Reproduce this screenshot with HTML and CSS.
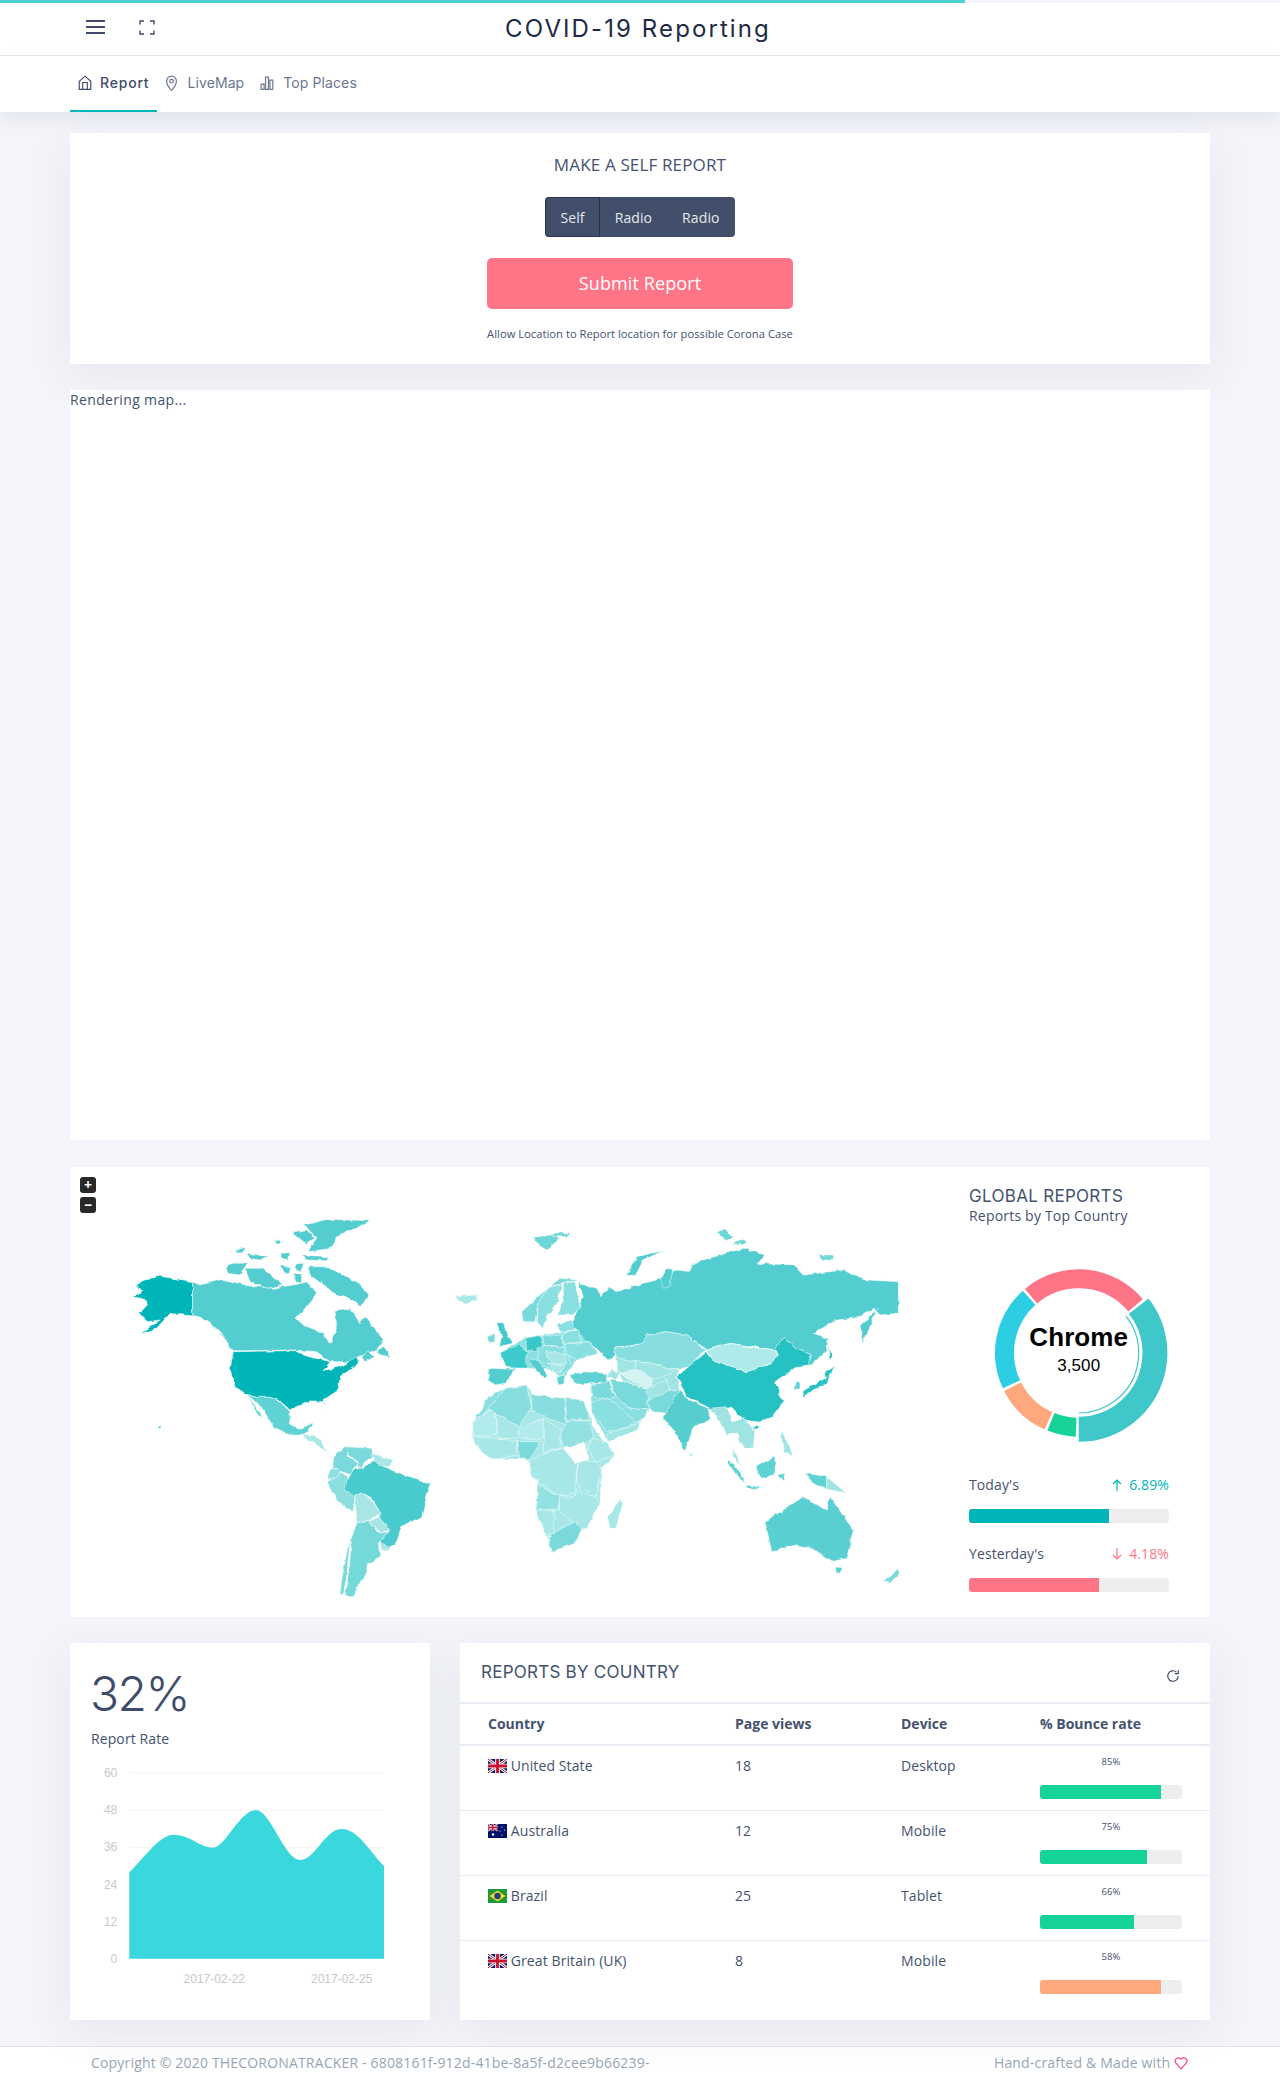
FILE: index.html
```html
<!DOCTYPE html>
<html lang="en">
<head>
    <meta charset="UTF-8">
    <meta name="viewport" content="width=device-width, initial-scale=1.0">
    <title>COVID-19 Reporting</title>
    <link rel="stylesheet" href="styles.css">
</head>
<body>
    <div class="load-bar"></div>
    <header class="topbar">
        <div class="topbar-icons">
            <svg class="icon-menu" width="19" height="14" viewBox="0 0 19 14"><path d="M0 1h19M0 7h19M0 13h19" stroke="#3e4b6b" stroke-width="2"/></svg>
            <svg class="icon-expand" width="16" height="15" viewBox="0 0 16 15"><path d="M1 4.500V1h4M11 1h4v3.500M15 10.500V14h-4M5 14H1v-3.500" fill="none" stroke="#3e4b6b" stroke-width="1.400"/></svg>
        </div>
        <div class="brand">COVID-19 Reporting</div>
    </header>
    <nav class="tabs">
        <a class="tab active">
            <svg width="14" height="15" viewBox="0 0 24 26" fill="none" stroke="currentColor" stroke-width="2"><path d="M2 11l10-9 10 9v14H2z"/><path d="M8 25V13h8v12"/></svg>
            Report
        </a>
        <a class="tab">
            <svg width="13" height="16" viewBox="0 0 20 26" fill="none" stroke="currentColor" stroke-width="2"><path d="M10 25S2 16 2 10a8 8 0 0 1 16 0c0 6-8 15-8 15z"/><circle cx="10" cy="10" r="3"/></svg>
            LiveMap
        </a>
        <a class="tab">
            <svg width="14" height="14" viewBox="0 0 24 24" fill="none" stroke="currentColor" stroke-width="2"><path d="M2 14h5v9H2zM9.500 2h5v21h-5zM17 7h5v16h-5z"/></svg>
            Top Places
        </a>
    </nav>

    <main class="content">
        <section class="card shadow report-card">
            <h4 class="report-title">MAKE A SELF REPORT</h4>
            <div class="btn-group">
                <button class="selected">Self</button>
                <button>Radio</button>
                <button>Radio</button>
            </div>
            <button class="btn-submit">Submit Report</button>
            <p class="report-note">Allow Location to Report location for possible Corona Case</p>
        </section>

        <section class="card live-map">Rendering map...</section>

        <section class="card global-card">
            <div class="zoom-controls">
                <span>+</span>
                <span>−</span>
            </div>
            <svg class="world" width="875" height="450" viewBox="70 1167 875 450">
                <defs>
                    <filter id="rough" x="-2%" y="-2%" width="104%" height="104%">
                        <feTurbulence type="fractalNoise" baseFrequency=".14" numOctaves="2" seed="4"/>
                        <feDisplacementMap in="SourceGraphic" scale="4" xChannelSelector="R" yChannelSelector="G"/>
                    </filter>
                </defs>
                <g filter="url(#rough)">
                <!-- Americas, coordinates are 3x from 60,1160 -->
                <g transform="translate(60 1160) scale(.33333)" stroke="#fff" stroke-width="1.500">
                    <path fill="#00b5b8" d="M398 365L290 347 228 375 245 395 218 410 258 418 262 435 238 460 262 485 300 480 240 522 290 505 330 460 345 462 398 468Z"/>
                    <path fill="#52cdd0" d="M398 365L420 375 490 358 570 378 640 385 700 375 745 365 770 400 735 445 708 475 730 495 790 520 810 553 830 500 825 450 870 445 900 488 915 470 970 540 950 570 895 590 870 605 810 605 770 575 710 570 520 572 490 530 465 505 440 480 398 465Z"/>
                    <path fill="#52cdd0" d="M735 195L800 178 930 182 890 205 835 225 815 265 745 275 768 235ZM700 215L740 210 765 235 740 250 710 235ZM745 320L800 320 890 365 928 405 905 440 860 410 820 400 790 370 745 345ZM555 325L610 325 670 375 620 385 570 365ZM505 310L560 310 540 345 500 340ZM560 280L630 290 600 300 570 295ZM660 280L690 278 685 298 660 295ZM725 285L805 290 800 302 740 300ZM525 270L560 262 545 280ZM640 238L675 250 650 252ZM660 318L695 320 690 340 670 342ZM705 312L735 310 725 335 705 330ZM700 340L725 345 725 370 705 365ZM905 590L925 575 945 590 915 605ZM950 575L970 555 990 590 960 585Z"/>
                    <path fill="#00b5b8" d="M520 575L708 572 745 590 790 600 810 605 790 632 840 620 890 590 895 610 840 650 835 690 790 720 805 755 790 725 750 722 690 750 660 722 625 712 585 712 560 703 525 680 510 630Z"/>
                    <path fill="#5fd2d3" d="M560 705L585 712 630 712 660 725 690 755 690 790 715 808 760 788 745 815 720 825 690 825 640 800 610 750 580 720ZM565 708L610 775 590 760Z"/>
                    <path fill="#aae8e8" d="M730 825L760 825 785 840 790 865 815 880 790 870 760 845 730 835Z"/>
                    <path fill="#7ad9da" d="M825 880L860 860 865 890 895 910 880 930 875 945 845 935 815 925ZM860 860L935 865 940 890 915 905 900 925 890 905 865 885Z"/>
                    <path fill="#a8e7e7" d="M935 880L1000 900 985 920 945 920Z"/>
                    <path fill="#8ddfdf" d="M815 925L845 935 815 965 802 955ZM802 965L845 938 880 960 855 985 885 1010 880 1055 845 1035 815 995Z"/>
                    <path fill="#49cbcd" d="M880 930L915 920 940 905 1005 935 1110 970 1085 1070 1025 1100 1010 1145 985 1165 960 1145 985 1110 960 1085 955 1050 940 1020 905 1000 880 1010 855 985 860 965Z"/>
                    <path fill="#a8e6e6" d="M885 1005L905 1000 940 1025 960 1060 925 1085 890 1088ZM925 1085L960 1070 985 1110 965 1120ZM960 1145L990 1165 965 1175Z"/>
                    <path fill="#74d8d9" d="M890 1088L925 1085 960 1120 985 1115 955 1150 960 1190 925 1215 920 1245 895 1275 880 1310 855 1310 870 1200 875 1130ZM880 1100L870 1150 860 1240 850 1305 840 1305 845 1260 860 1180Z"/>
                    <path fill="#a8e7e7" d="M1188 405L1250 403 1250 420 1215 432Z"/>
                    <path fill="#00b5b8" d="M296 796h6v6h-6z"/>
                </g>
                <!-- Eurasia, Africa and Oceania, 3x from 450,1200 -->
                <g transform="translate(450 1200) scale(.33333)" stroke="#fff" stroke-width="1.500">
                    <path fill="#a8e7e7" d="M18 288L75 282 82 298 50 312 28 305Z"/>
                    <path fill="#6dd6d7" d="M250 112L300 105 330 115 290 150 265 135ZM300 100L358 98 350 110 310 110ZM800 95L825 88 850 110 825 122ZM855 125L880 118 888 130 850 132ZM1105 165L1150 165 1150 178 1115 180Z"/>
                    <path fill="#8ae0e0" d="M150 458L225 415 335 395 385 390 420 425 445 460 380 480 365 500 340 540 300 510 235 505Z"/>
                    <path fill="#a0e4e4" d="M495 470L690 505 680 530 690 570 660 570 590 565 520 545 505 520Z"/>
                    <path fill="#8ae0e0" d="M420 550L470 550 495 590 540 625 600 630 578 655 545 680 475 725 425 635Z"/>
                    <path fill="#a8e7e7" d="M115 590L165 565 230 555 250 585 345 595 400 600 425 660 440 700 470 725 495 765 455 810 450 910 410 985 395 990 375 1030 305 1055 290 1010 258 930 265 850 240 820 240 785 210 775 130 780 90 750 65 710 70 665Z"/>
                    <path fill="#52cdd0" d="M385 250L440 265 455 290 480 262 500 275 560 255 640 235 680 210 720 215 725 195 760 180 880 145 945 165 920 190 1030 195 1060 225 1180 210 1250 240 1345 245 1345 340 1290 345 1270 325 1215 355 1160 360 1090 400 1135 415 1130 450 1085 495 1075 495 1085 460 1040 445 1000 412 975 450 920 440 840 430 770 450 710 405 650 395 590 405 580 435 500 440 492 470 470 480 440 445 385 400 365 370 385 320 400 290Z"/>
                    <path fill="#52cdd0" d="M530 225L560 170 640 152 580 180 555 230ZM632 240L650 205 668 208 660 260 640 265ZM1230 380L1285 325 1255 385 1238 430Z"/>
                    <path fill="#7ad9da" d="M215 335L270 285 330 235 385 240 340 250 300 260 265 310 255 365 220 365Z"/>
                    <path fill="#8ae0e0" d="M300 262L335 252 325 300 295 345 280 385 258 370 262 310ZM340 250L375 245 390 320 365 345 325 345 340 290Z"/>
                    <path fill="#43c9cb" d="M140 368L160 368 170 400 188 430 148 440 155 410Z"/>
                    <path fill="#7ad9da" d="M115 410L135 400 135 425 118 428Z"/>
                    <path fill="#3ccacc" d="M150 458L205 435 235 455 225 490 235 505 170 503Z"/>
                    <path fill="#52cdd0" d="M118 505L195 508 165 550 135 555 118 540Z"/>
                    <path fill="#37c6c8" d="M225 415L270 405 280 445 255 455 230 450Z"/>
                    <path fill="#52cdd0" d="M235 480L262 478 295 530 285 535 255 505Z"/>
                    <path fill="#7ad9da" d="M275 408L335 405 340 440 285 440Z"/>
                    <path fill="#8ae0e0" d="M340 395L385 390 395 430 340 430ZM340 430L420 425 445 460 380 480 345 460ZM320 375L365 360 375 390 330 395ZM265 440L345 440 365 500 330 530 300 510 262 475Z"/>
                    <path fill="#a8e7e7" d="M285 455L345 460 350 490 310 495ZM295 490L345 495 330 520 310 515Z" />
                    <path fill="#5fd2d3" d="M360 525L400 515 470 520 470 550 370 552ZM320 530L345 525 340 550 325 552Z"/>
                    <path fill="#88dede" d="M492 445L575 435 590 405 650 395 710 405 765 450 720 500 660 510 610 490 555 485 520 480 495 470Z"/>
                    <path fill="#a0e4e4" d="M555 485L610 490 660 510 690 505 640 530 610 535 560 505ZM480 510L510 515 500 540 470 530Z"/>
                    <path fill="#d4f3f3" d="M510 520L560 505 610 540 600 565 545 545Z"/>
                    <path fill="#a0e4e4" d="M590 565L650 540 660 570 625 605 590 600Z"/>
                    <path fill="#7ad9da" d="M480 540L520 545 590 565 600 630 540 625 495 590ZM590 605L660 570 690 570 650 640 605 635ZM425 555L478 545 495 590 470 600 425 590Z"/>
                    <path fill="#57ced0" d="M690 570L715 600 775 625 780 660 730 680 705 755 675 695 640 655 655 625Z"/>
                    <path fill="#26c1c3" d="M680 530L770 455 790 480 890 515 965 490 985 465 975 445 1000 412 1040 445 1085 460 1075 495 1040 500 975 545 1000 605 970 650 920 665 880 660 845 625 780 625 710 590ZM912 680l12-5 2 10-12 3z"/>
                    <path fill="#aeeaea" d="M770 450L840 430 920 445 975 450 985 465 965 490 890 515 790 480Z"/>
                    <path fill="#2cc3c5" d="M1055 575L1130 530 1125 515 1155 495 1130 550 1090 570 1060 590ZM1135 440L1148 470 1138 480Z"/>
                    <path fill="#5fd2d3" d="M1035 545L1050 545 1050 570 1032 570Z"/>
                    <path fill="#8ae0e0" d="M425 605L480 595 555 665 540 680 470 695 425 635Z"/>
                    <path fill="#a0e4e4" d="M470 700L545 680 578 655 560 690 475 725Z"/>
                    <path fill="#88dede" d="M348 595L400 600 420 660 350 660Z"/>
                    <path fill="#9fe3e3" d="M780 625L830 620 850 665 880 655 915 690 910 740 880 745 860 700 840 700 830 705 800 650ZM845 740L860 765 875 800 850 770Z"/>
                    <path fill="#5fd2d3" d="M825 778L850 790 890 850 870 840ZM915 800L975 770 975 820 935 835ZM890 855L950 865 895 865ZM985 825L1005 820 1000 845ZM1065 820L1130 830 1130 868 1090 850Z"/>
                    <path fill="#a0e4e4" d="M1130 830L1190 880 1130 868ZM990 690L1005 710 1030 770 1000 750Z"/>
                    <path fill="#5acfd1" d="M945 965L1015 920 1060 890 1100 915 1130 930 1140 890 1210 990 1190 1075 1145 1085 1085 1045 1040 1035 965 1055 955 1010ZM1155 1105L1178 1105 1168 1125Z"/>
                    <path fill="#7ad9da" d="M1345 1105L1345 1125 1320 1150 1302 1145Z"/>
                    <path fill="#a8e7e7" d="M510 898L518 910 498 985 480 985 472 950ZM718 750l8 18-8 3z"/>
                    <path fill="#8ae0e0" d="M115 590L165 565 140 600 120 625 70 665Z"/>
                    <path fill="#88dede" d="M115 625L165 565 230 555 245 620 205 680 135 640ZM245 585L345 595 348 675 280 650 245 625Z"/>
                    <path fill="#b1ebeb" d="M68 665L120 630 135 640 140 705 68 710ZM205 685L280 655 285 700 270 720 205 715Z"/>
                    <path fill="#a8e7e7" d="M135 640L205 680 205 715 145 715ZM280 655L335 690 330 745 280 755ZM425 715L470 725 495 765 440 785 410 750ZM65 710L145 715 200 725 200 765 130 780 90 750ZM275 760L340 745 385 790 380 810 375 890 330 890 265 845 240 820 240 785ZM385 780L440 785 455 810 440 890 395 880 380 840ZM258 930L315 935 310 1000 290 1010ZM325 890L410 870 450 910 410 985 390 985 330 935Z"/>
                    <path fill="#93e1e1" d="M350 662L420 662 430 710 405 730 340 745 332 710ZM265 855L330 890 325 930 258 930Z"/>
                    <path fill="#7ad9da" d="M200 725L272 725 240 780 210 775ZM295 1010L315 995 380 965 395 990 375 1030 305 1055Z"/>
                    <path fill="#fff" stroke="none" d="M340 745L405 730 415 780 375 790Z"/>
                </g>
                </g>
            </svg>
            <aside class="global-side">
                <h4 class="global-title">GLOBAL REPORTS</h4>
                <p class="global-sub">Reports by Top Country</p>
                <svg class="donut" width="200" height="190" viewBox="0 0 200 190">
                    <g transform="translate(109.700 100)" fill="none">
                        <circle r="74.200" stroke="#ff7588" stroke-width="19" pathLength="360" stroke-dasharray="90 270" transform="rotate(230)"/>
                        <circle r="74.200" stroke="#2dcee3" stroke-width="19" pathLength="360" stroke-dasharray="73 287" transform="rotate(155)"/>
                        <circle r="74.200" stroke="#ffa87d" stroke-width="19" pathLength="360" stroke-dasharray="39 321" transform="rotate(114)"/>
                        <circle r="74.200" stroke="#16d39a" stroke-width="19" pathLength="360" stroke-dasharray="20 340" transform="rotate(92)"/>
                        <circle r="76.200" stroke="#40c7ca" stroke-width="25" pathLength="360" stroke-dasharray="128 232" transform="rotate(-38)"/>
                        <circle r="60" stroke="#40c7ca" stroke-width="1.200" pathLength="360" stroke-dasharray="128 232" transform="rotate(-38)"/>
                        <text class="donut-name" y="-7" text-anchor="middle">Chrome</text>
                        <text class="donut-value" y="18" text-anchor="middle">3,500</text>
                    </g>
                </svg>
                <div class="stat-row">
                    <span>Today's</span>
                    <span class="stat-up"><svg width="10" height="12" viewBox="0 0 10 12" fill="none" stroke="currentColor" stroke-width="1.200"><path d="M5 12V1M1 5l4-4 4 4"/></svg>6.89%</span>
                </div>
                <div class="bar"><div class="bar-fill fill-teal" style="width: 70%"></div></div>
                <div class="stat-row">
                    <span>Yesterday's</span>
                    <span class="stat-down"><svg width="10" height="12" viewBox="0 0 10 12" fill="none" stroke="currentColor" stroke-width="1.200"><path d="M5 0v11M1 7l4 4 4-4"/></svg>4.18%</span>
                </div>
                <div class="bar"><div class="bar-fill fill-pink" style="width: 65%"></div></div>
            </aside>
        </section>

        <div class="bottom-row">
            <section class="card shadow rate-card">
                <div class="rate-value">32%</div>
                <div class="rate-label">Report Rate</div>
                <svg class="rate-chart" width="300" height="240" viewBox="0 0 300 240">
                    <path d="M39.300 13H294M39.300 50H294M39.300 87.300H294" stroke="#f2f2f2"/>
                    <path fill="#3ad8dc" d="M39.300 198.700V112.300C55 97 70 74.700 83.300 74.700C100 74.700 110 87.700 123.300 87.700C135 87.700 150 50 166 50C180 50 195 100 210 100C225 100 235 69 251.700 69C268 69 280 92 294 106V198.700Z"/>
                    <g class="chart-text" text-anchor="end">
                        <text x="27.300" y="17">60</text>
                        <text x="27.300" y="54">48</text>
                        <text x="27.300" y="91">36</text>
                        <text x="27.300" y="129">24</text>
                        <text x="27.300" y="166">12</text>
                        <text x="27.300" y="203">0</text>
                    </g>
                    <g class="chart-text" text-anchor="middle">
                        <text x="124.300" y="223">2017-02-22</text>
                        <text x="251.700" y="223">2017-02-25</text>
                    </g>
                </svg>
            </section>

            <section class="card shadow table-card">
                <div class="table-head">
                    <h4>REPORTS BY COUNTRY</h4>
                    <svg width="14" height="14" viewBox="0 0 24 24" fill="none" stroke="#3e4b6b" stroke-width="2"><path d="M21 12a9 9 0 1 1-3-6.700"/><path d="M21 2v6h-6"/></svg>
                </div>
                <table class="country-table">
                    <thead>
                        <tr>
                            <th>Country</th>
                            <th>Page views</th>
                            <th>Device</th>
                            <th>% Bounce rate</th>
                        </tr>
                    </thead>
                    <tbody>
                        <tr>
                            <td><svg class="flag" viewBox="0 0 19 14"><use href="#flag-uk"/></svg> United State</td>
                            <td>18</td>
                            <td>Desktop</td>
                            <td class="bounce"><small>85%</small><div class="bar"><div class="bar-fill fill-green" style="width: 85%"></div></div></td>
                        </tr>
                        <tr>
                            <td><svg class="flag" viewBox="0 0 19 14"><rect width="19" height="14" fill="#00126b"/><use href="#flag-uk" transform="scale(.5)"/><circle cx="5" cy="10.500" r="1.200" fill="#fff"/><circle cx="14" cy="3" r=".6" fill="#fff"/><circle cx="16.500" cy="6" r=".6" fill="#fff"/><circle cx="12" cy="7" r=".6" fill="#fff"/><circle cx="14" cy="11" r=".6" fill="#fff"/></svg> Australia</td>
                            <td>12</td>
                            <td>Mobile</td>
                            <td class="bounce"><small>75%</small><div class="bar"><div class="bar-fill fill-green" style="width: 75%"></div></div></td>
                        </tr>
                        <tr>
                            <td><svg class="flag" viewBox="0 0 19 14"><rect width="19" height="14" fill="#1f9a3a"/><path d="M9.500 1.500L17.500 7 9.500 12.500 1.500 7z" fill="#f6dc1c"/><circle cx="9.500" cy="7" r="3.200" fill="#1c3f94"/></svg> Brazil</td>
                            <td>25</td>
                            <td>Tablet</td>
                            <td class="bounce"><small>66%</small><div class="bar"><div class="bar-fill fill-green" style="width: 66%"></div></div></td>
                        </tr>
                        <tr>
                            <td><svg class="flag" viewBox="0 0 19 14"><use href="#flag-uk"/></svg> Great Britain (UK)</td>
                            <td>8</td>
                            <td>Mobile</td>
                            <td class="bounce"><small>58%</small><div class="bar"><div class="bar-fill fill-orange" style="width: 85%"></div></div></td>
                        </tr>
                    </tbody>
                </table>
            </section>
        </div>
    </main>

    <footer class="footer">
        <span>Copyright © 2020 THECORONATRACKER - 6808161f-912d-41be-8a5f-d2cee9b66239-</span>
        <span class="footer-made">Hand-crafted &amp; Made with
            <svg width="14" height="14" viewBox="0 0 24 24" fill="none" stroke="#ff4081" stroke-width="2"><path d="M12 22L3 12a5.500 5.500 0 0 1 9-6.500A5.500 5.500 0 0 1 21 12z"/></svg>
        </span>
    </footer>

    <svg class="defs" width="0" height="0">
        <defs>
            <g id="flag-uk">
                <rect width="19" height="14" fill="#012169"/>
                <path d="M0 0L19 14M19 0L0 14" stroke="#fff" stroke-width="2.800"/>
                <path d="M0 0L19 14M19 0L0 14" stroke="#c8102e" stroke-width="1"/>
                <path d="M9.500 0v14M0 7h19" stroke="#fff" stroke-width="4.600"/>
                <path d="M9.500 0v14M0 7h19" stroke="#c8102e" stroke-width="2.800"/>
            </g>
        </defs>
    </svg>
</body>
</html>
```

FILE: styles.css
```css
body {
    margin: 0;
    background-color: #f4f5fa;
    color: #445270;
    font-family: "Open Sans", Arial, sans-serif;
    font-size: 14px;
    line-height: 20px;
    letter-spacing: 0.1px;
}
h4, p {
    margin: 0;
    font-weight: 400;
}
.load-bar {
    width: 965px;
    height: 3px;
    background-color: #4dd0d2;
}
.topbar {
    display: flex;
    align-items: center;
    height: 52px;
    background-color: #fff;
    border-bottom: 1px solid #e8e8e8;
    position: relative;
}
.topbar-icons {
    display: flex;
    align-items: center;
    gap: 34px;
    padding: 0 0 4px 86px;
}
.brand {
    flex: 1;
    padding-right: 159px;
    text-align: center;
    font-family: Inter, Arial, sans-serif;
    font-size: 24px;
    letter-spacing: 2.100px;
    color: #1e2a44;
}
.tabs {
    display: flex;
    height: 56px;
    padding-left: 70px;
    background-color: #fff;
    box-shadow: 0 6px 16px rgba(62, 75, 107, 0.1);
    position: relative;
}
.tab {
    display: flex;
    align-items: center;
    gap: 9px;
    padding: 0 8px 3px;
    font-family: Inter, Arial, sans-serif;
    font-size: 14px;
    letter-spacing: 0.1px;
    color: #6b7690;
}
.tab.active {
    gap: 8px;
    padding: 0 8px 1px;
    color: #3e4b6b;
    border-bottom: 2px solid #00b5b8;
    font-weight: 500;
    letter-spacing: 0.8px;
}
.content {
    padding: 21px 70px 26px;
}
.card {
    background-color: #fff;
}
.shadow {
    box-shadow: 0 10px 40px rgba(62, 75, 107, 0.08);
}
.report-card {
    display: flex;
    flex-direction: column;
    align-items: center;
    height: 231px;
}
.report-title {
    margin-top: 22px;
    font-size: 17px;
    letter-spacing: 0.15px;
    line-height: 20px;
}
.btn-group {
    display: flex;
    margin-top: 22px;
    height: 40px;
    border-radius: 4px;
    background-color: #414f6b;
    overflow: hidden;
}
.btn-group button {
    background: none;
    border: 1px solid transparent;
    color: #e6e8ee;
    font-family: inherit;
    font-size: 14px;
    letter-spacing: inherit;
    padding: 0 14px;
}
.btn-group button.selected {
    border-color: #29324a;
    border-radius: 4px 0 0 4px;
}
.btn-submit {
    width: 306px;
    height: 51px;
    margin-top: 21px;
    padding-bottom: 2px;
    background-color: #ff7588;
    border: none;
    border-radius: 5px;
    color: #fff;
    font-family: inherit;
    font-size: 18px;
    letter-spacing: inherit;
}
.report-note {
    margin-top: 15px;
    font-size: 11.200px;
    letter-spacing: 0.02px;
}
.live-map {
    height: 750px;
    margin-top: 26px;
    line-height: 20px;
    letter-spacing: 0.35px;
}
.global-card {
    display: flex;
    height: 450px;
    margin-top: 27px;
    position: relative;
}
.zoom-controls {
    position: absolute;
    left: 10px;
    top: 10px;
    display: flex;
    flex-direction: column;
    gap: 4px;
}
.zoom-controls span {
    width: 16px;
    height: 16px;
    border-radius: 3px;
    background-color: #292929;
    color: #fff;
    font-size: 14px;
    font-weight: 700;
    line-height: 16px;
    text-align: center;
}
.world {
    display: block;
    flex: none;
}
.global-side {
    flex: 1;
    padding: 19px 43px 0 24px;
}
.global-title {
    font-family: Inter, Arial, sans-serif;
    font-size: 17px;
    letter-spacing: 0.3px;
    line-height: 20px;
}
.global-sub {
    line-height: 20px;
    letter-spacing: 0.2px;
}
.donut {
    display: block;
    margin: 27px 0 0;
}
.donut-name {
    font-family: "Liberation Sans", Arial, sans-serif;
    font-size: 26px;
    font-weight: 700;
    fill: #000;
}
.donut-value {
    font-family: "Liberation Sans", Arial, sans-serif;
    font-size: 17px;
    fill: #000;
}
.stat-row {
    display: flex;
    justify-content: space-between;
    margin: 0 0 14px;
    height: 20px;
}
.bar + .stat-row {
    margin-top: 21px;
}
.donut + .stat-row {
    margin-top: 32px;
}
.stat-row svg {
    margin-right: 7px;
    vertical-align: -1px;
}
.stat-up {
    color: #00b5b8;
}
.stat-down {
    color: #ff7588;
}
.bar {
    height: 14px;
    background-color: #eee;
    border-radius: 3px;
    overflow: hidden;
}
.bar-fill {
    height: 100%;
}
.fill-teal {
    background-color: #00b5b8;
}
.fill-pink {
    background-color: #ff7588;
}
.fill-green {
    background-color: #16d39a;
}
.fill-orange {
    background-color: #ffa87d;
}
.bottom-row {
    display: flex;
    gap: 30px;
    margin-top: 26px;
}
.rate-card {
    width: 360px;
    height: 377px;
    padding: 21px 0 0 20px;
    box-sizing: border-box;
}
.rate-value {
    font-family: Inter, Arial, sans-serif;
    font-size: 48px;
    font-weight: 300;
    letter-spacing: -1.500px;
    line-height: 60px;
    color: #3e4b6b;
}
.rate-label {
    margin-top: 5px;
    padding-left: 1px;
}
.rate-chart {
    display: block;
    margin: 11px 0 0;
}
.chart-text {
    font-family: "Liberation Sans", Arial, sans-serif;
    font-size: 12px;
    letter-spacing: 0;
    fill: #c8c8c8;
}
.table-card {
    flex: 1;
    height: 377px;
}
.table-head {
    display: flex;
    align-items: center;
    justify-content: space-between;
    height: 59px;
    padding: 0 30px 0 21px;
}
.table-head h4 {
    font-family: Inter, Arial, sans-serif;
    font-size: 17px;
    letter-spacing: 0.25px;
    padding-bottom: 2px;
}
.table-head svg {
    margin-top: 6px;
}
.country-table {
    width: 100%;
    border-collapse: collapse;
    table-layout: fixed;
}
.country-table th {
    height: 40px;
    padding: 0;
    text-align: left;
    font-weight: 700;
    letter-spacing: 0;
    border-top: 2px solid #e7edf3;
    border-bottom: 2px solid #e7edf3;
}
.country-table td {
    height: 65px;
    padding: 10px 0 0;
    vertical-align: top;
    border-bottom: 1px solid #e7edf3;
    box-sizing: border-box;
}
.country-table tr:last-child td {
    border-bottom: none;
}
.country-table th:first-child,
.country-table td:first-child {
    padding-left: 28px;
}
.country-table th:nth-child(1) {
    width: 247px;
}
.country-table th:nth-child(2) {
    width: 166px;
}
.country-table th:nth-child(3) {
    width: 139px;
}
.country-table .bounce {
    padding: 10px 28px 0 0;
    text-align: center;
}
.bounce small {
    display: block;
    height: 29px;
    font-size: 9.500px;
    line-height: 10px;
    padding-top: 1px;
    box-sizing: border-box;
}
.flag {
    width: 19px;
    height: 14px;
    vertical-align: -2px;
}
.footer {
    display: flex;
    justify-content: space-between;
    height: 31px;
    padding: 6px 92px 0 91px;
    box-sizing: border-box;
    background-color: #fff;
    border-top: 1px solid #e4e4e4;
    color: #96a5b3;
    letter-spacing: 0.18px;
}
.footer-made svg {
    vertical-align: -2px;
}
.defs {
    position: absolute;
}
```
